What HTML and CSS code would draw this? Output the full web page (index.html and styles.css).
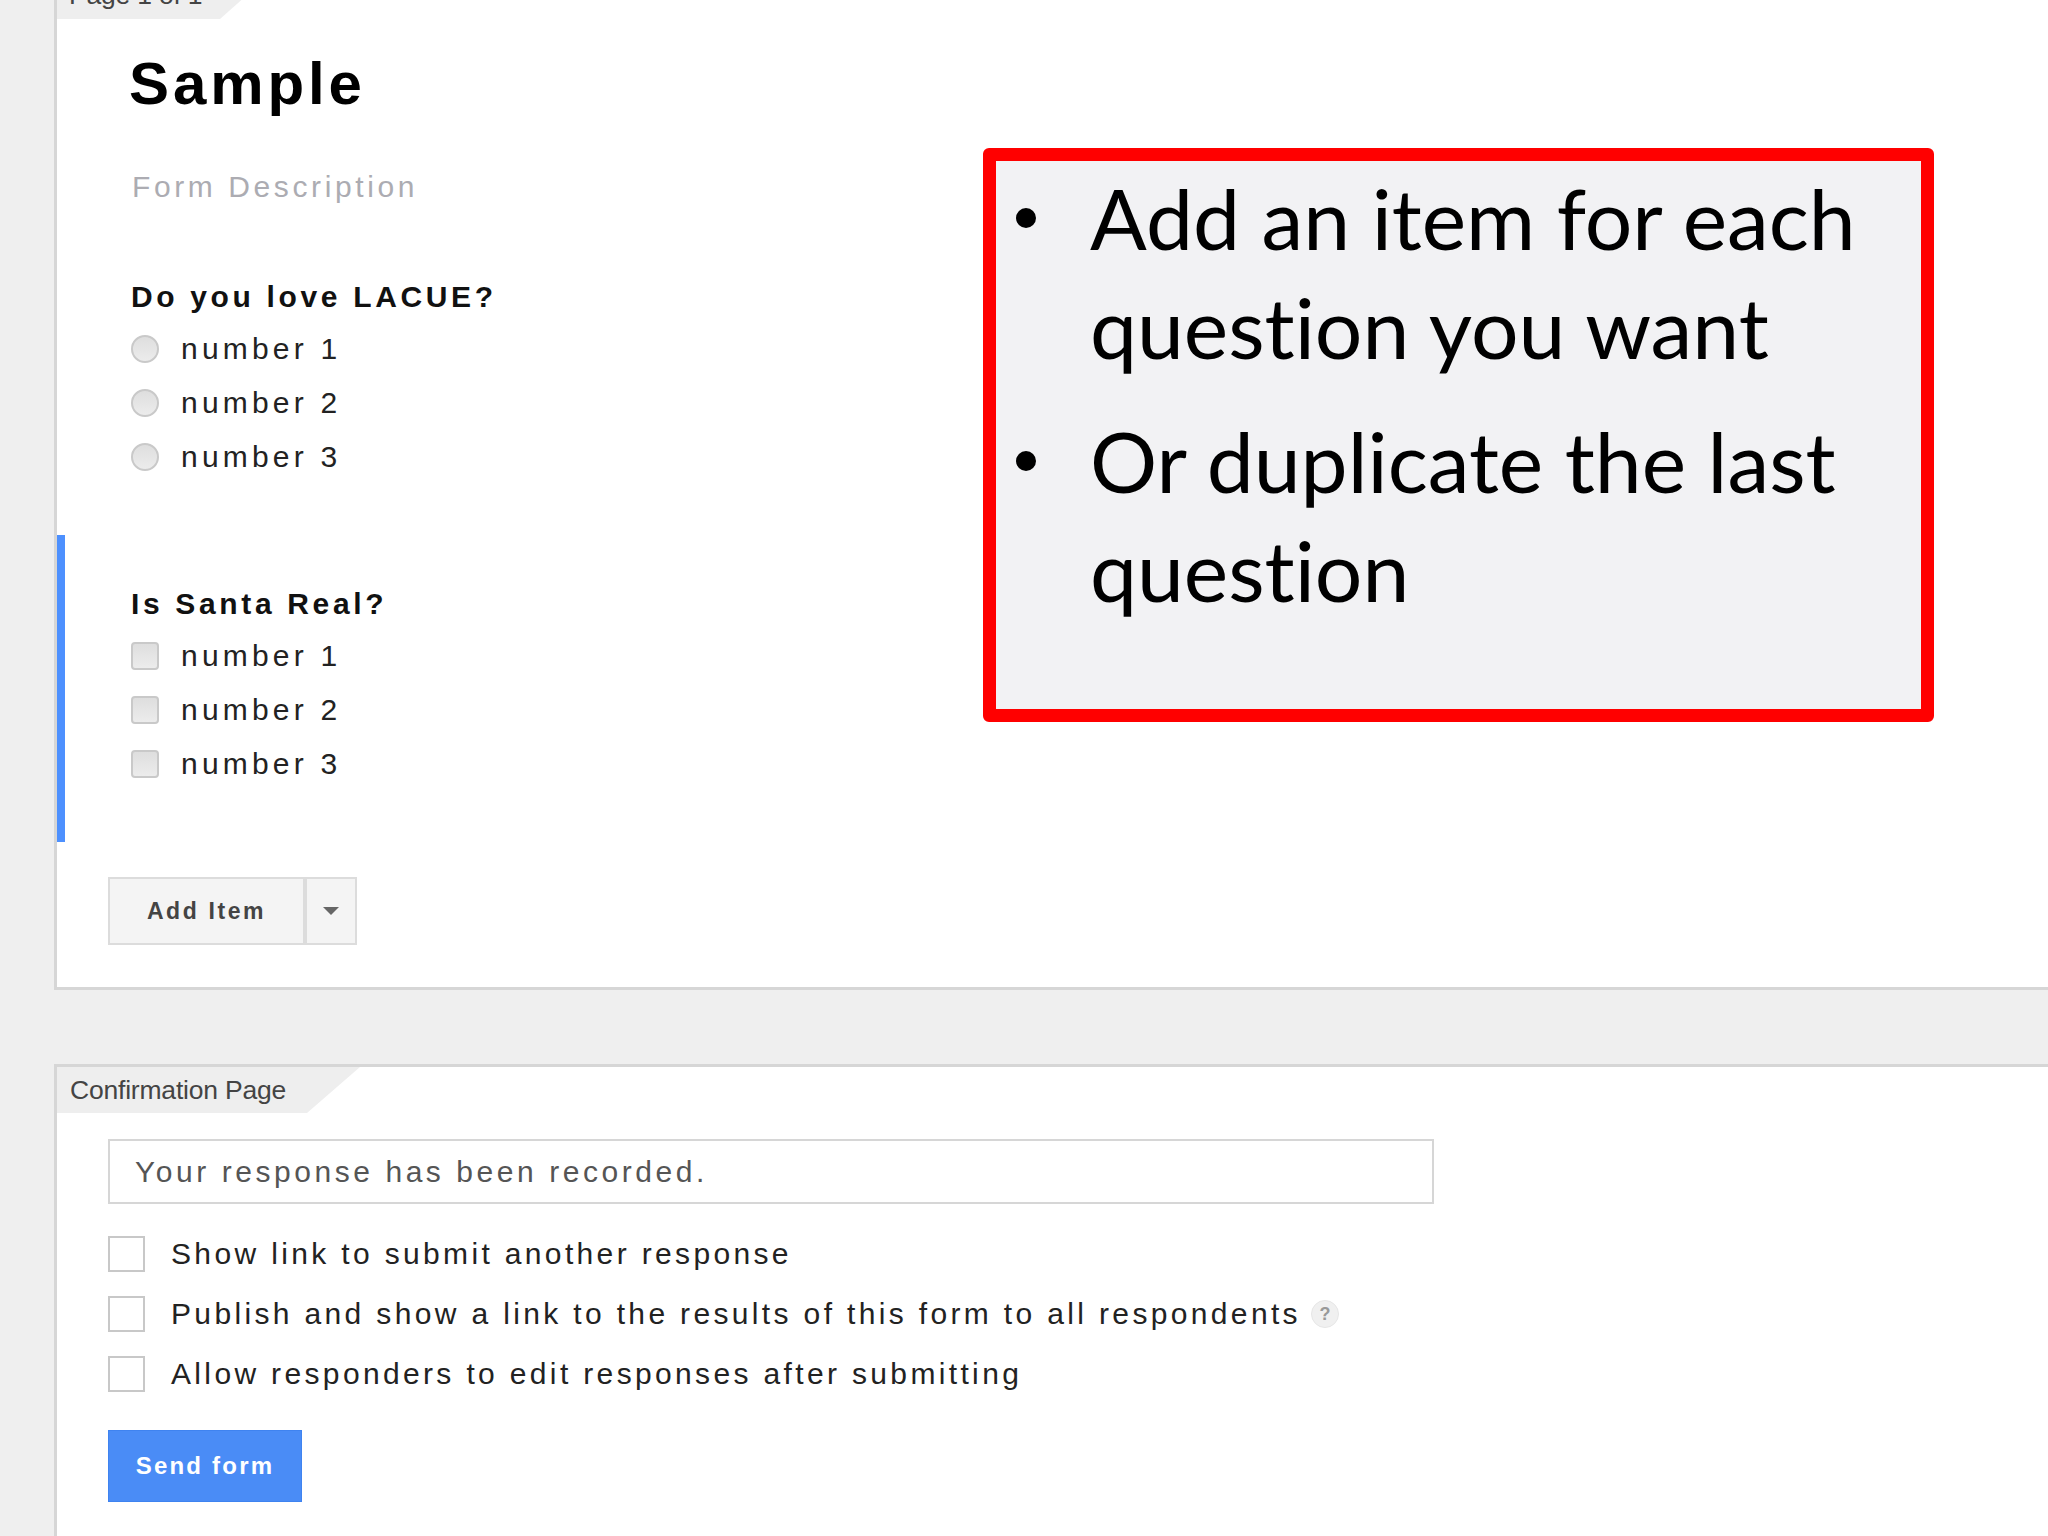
FILE: index.html
```html
<!DOCTYPE html>
<html lang="en">
<head>
<meta charset="utf-8">
<title>Sample - Form editor</title>
<link rel="stylesheet" href="styles.css">
</head>
<body>
<div class="page">
  <section class="card card-form">
    <div class="tab tab-page"><span class="tab-label">Page 1 of 1</span></div>
    <div class="card-body">
      <div class="form-col">
        <h1 class="form-title">Sample</h1>
        <p class="form-desc">Form Description</p>
        <div class="item">
          <div class="item-title">Do you love LACUE?</div>
          <ul class="options">
            <li class="option"><span class="radio"></span><span class="opt-text">number 1</span></li>
            <li class="option"><span class="radio"></span><span class="opt-text">number 2</span></li>
            <li class="option"><span class="radio"></span><span class="opt-text">number 3</span></li>
          </ul>
        </div>
        <div class="item item-active">
          <div class="item-title">Is Santa Real?</div>
          <ul class="options">
            <li class="option"><span class="check"></span><span class="opt-text">number 1</span></li>
            <li class="option"><span class="check"></span><span class="opt-text">number 2</span></li>
            <li class="option"><span class="check"></span><span class="opt-text">number 3</span></li>
          </ul>
        </div>
        <div class="add-item">
          <button class="add-main" type="button">Add Item</button>
          <button class="add-arrow" type="button"><span class="caret"></span></button>
        </div>
      </div>
      <div class="callout">
        <ul class="callout-list">
          <li class="callout-item"><span class="bullet"></span><span class="callout-text">Add an item for each question you want</span></li>
          <li class="callout-item"><span class="bullet"></span><span class="callout-text">Or duplicate the last question</span></li>
        </ul>
      </div>
    </div>
  </section>

  <section class="card card-confirm">
    <div class="tab tab-confirm"><span class="tab-label">Confirmation Page</span></div>
    <div class="confirm-body">
      <div class="text-field">Your response has been recorded.</div>
      <ul class="settings">
        <li class="setting"><span class="box"></span><span class="set-text">Show link to submit another response</span></li>
        <li class="setting"><span class="box"></span><span class="set-text">Publish and show a link to the results of this form to all respondents</span><span class="help">?</span></li>
        <li class="setting"><span class="box"></span><span class="set-text">Allow responders to edit responses after submitting</span></li>
      </ul>
      <button class="send" type="button">Send form</button>
    </div>
  </section>
</div>
</body>
</html>
```

FILE: styles.css
```css
* { box-sizing: border-box; }

html, body {
  margin: 0;
  padding: 0;
  background: #efefef;
  overflow: hidden;
}

body {
  font-family: "Liberation Sans", Arial, sans-serif;
  color: #222;
}

.page {
  padding-left: 54px;
}

.card {
  background: #fff;
  border-left: 3px solid #d6d6d6;
}

.card-form {
  margin-top: -28px;
  border-bottom: 3px solid #d6d6d6;
  padding-bottom: 42px;
}

.card-confirm {
  margin-top: 74px;
  border-top: 3px solid #d6d6d6;
  padding-bottom: 80px;
}

/* tabs */
.tab {
  height: 47px;
  background: #eeeeee;
  padding-left: 12px;
  font-size: 26.5px;
  line-height: 47px;
  letter-spacing: -0.2px;
  color: #444;
  clip-path: polygon(0 0, 100% 0, calc(100% - 53px) 100%, 0 100%);
}

.tab-page { width: 216px; }
.tab-confirm { width: 303px; height: 46px; line-height: 46px; padding-left: 13px; }

/* card 1 body */
.card-body {
  display: flex;
  align-items: flex-start;
}

.form-col {
  flex: 0 0 926px;
}

.form-title {
  margin: 33px 0 0;
  padding-left: 72px;
  font-size: 60px;
  line-height: 64px;
  font-weight: bold;
  letter-spacing: 3.9px;
  color: #000;
}

.form-desc {
  margin: 53px 0 0;
  padding-left: 75px;
  font-size: 30px;
  line-height: 36px;
  letter-spacing: 3.6px;
  color: #acacb2;
}

.item {
  margin-top: 23px;
  padding: 51px 0 51px 74px;
}

.item + .item { margin-top: 0; }

.item-active {
  border-left: 8px solid #4d90fe;
  padding-left: 66px;
}

.item-title {
  font-size: 30px;
  line-height: 36px;
  font-weight: bold;
  letter-spacing: 3.65px;
  color: #111;
}

.options {
  list-style: none;
  margin: 7px 0 0;
  padding: 0;
}

.option {
  display: flex;
  align-items: center;
  height: 54px;
}

.radio, .check {
  flex: none;
  width: 28px;
  height: 28px;
  border: 2px solid #c9c9c9;
  background: linear-gradient(#dedede, #ececec);
  margin-right: 22px;
}

.radio { border-radius: 50%; }
.check { border-radius: 4px; }

.opt-text {
  font-size: 30px;
  line-height: 54px;
  letter-spacing: 4.2px;
  color: #222;
}

.add-item {
  display: flex;
  margin: 35px 0 0 51px;
}

.add-main, .add-arrow {
  height: 68px;
  border: 2px solid #dcdcdc;
  background: #f4f4f4;
  padding: 0;
  font-family: "Liberation Sans", Arial, sans-serif;
}

.add-main {
  width: 197px;
  font-size: 23px;
  font-weight: bold;
  letter-spacing: 2.6px;
  color: #444;
}

.add-arrow {
  width: 52px;
  display: flex;
  align-items: center;
  justify-content: center;
}

.caret {
  width: 0;
  height: 0;
  border-left: 8px solid transparent;
  border-right: 8px solid transparent;
  border-top: 8px solid #666;
}

/* callout */
.callout {
  flex: 0 0 951px;
  margin-top: 129px;
  height: 574px;
  border: 13px solid #ff0000;
  border-radius: 6px;
  background: #f2f2f4;
  padding-top: 2px;
}

.callout-list {
  list-style: none;
  margin: 0;
  padding: 0;
}

.callout-item {
  display: flex;
  align-items: flex-start;
  font-family: Lato, "Open Sans", sans-serif;
  font-size: 84px;
  line-height: 109px;
  font-variant-ligatures: none;
  color: #000;
}

.callout-item + .callout-item { margin-top: 25px; }

.bullet {
  flex: none;
  width: 20px;
  height: 20px;
  border-radius: 50%;
  background: #000;
  margin: 45px 54px 0 20px;
}

.callout-text {
  flex: 1;
  padding-right: 30px;
}

/* card 2 body */
.confirm-body {
  padding: 26px 0 0 51px;
}

.text-field {
  width: 1326px;
  height: 65px;
  border: 2px solid #d6d6d6;
  padding-left: 25px;
  font-size: 30px;
  line-height: 61px;
  letter-spacing: 3.55px;
  color: #555;
}

.settings {
  list-style: none;
  margin: 20px 0 0;
  padding: 0;
}

.setting {
  display: flex;
  align-items: center;
  height: 60px;
}

.box {
  flex: none;
  width: 37px;
  height: 36px;
  border: 2px solid #c8c8c8;
  background: #fff;
  margin-right: 26px;
}

.set-text {
  font-size: 30px;
  line-height: 60px;
  letter-spacing: 3.35px;
  color: #222;
}

.help {
  flex: none;
  width: 28px;
  height: 28px;
  margin-left: 10px;
  border-radius: 50%;
  background: #f0f0f0;
  border: 1px solid #e6e6e6;
  color: #999;
  font-size: 18px;
  font-weight: bold;
  line-height: 26px;
  text-align: center;
}

.send {
  display: block;
  margin-top: 26px;
  width: 194px;
  height: 72px;
  border: 1px solid #3f83f0;
  background: #4a8cf6;
  color: #fff;
  font-family: "Liberation Sans", Arial, sans-serif;
  font-size: 24px;
  font-weight: bold;
  letter-spacing: 2.2px;
  padding: 0;
}
```
